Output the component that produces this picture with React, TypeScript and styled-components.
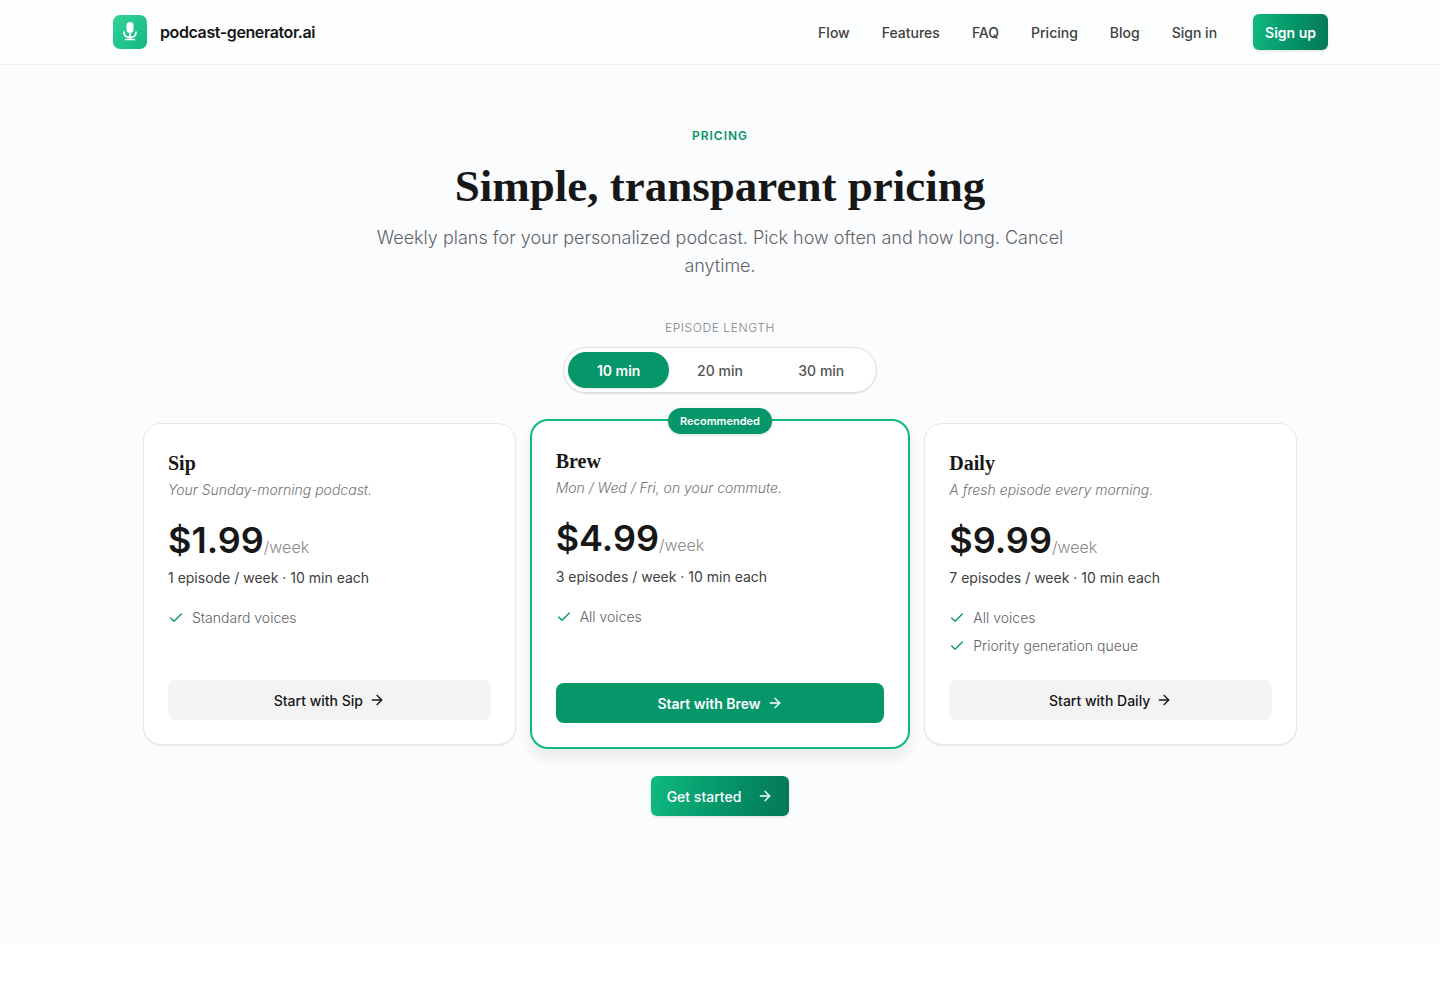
import React, { useState } from "react";
import styled, { createGlobalStyle, css } from "styled-components";
import { ArrowRight, Check } from "lucide-react";

const GlobalStyle = createGlobalStyle`
  *, *::before, *::after { box-sizing: border-box; }
  body {
    margin: 0;
    background: #fff;
    color: #171717;
    font-family: Inter, "Liberation Sans", sans-serif;
  }
  h1, h2, p, ul, fieldset { margin: 0; padding: 0; }
  button, input { font: inherit; }
`;

const serif = `"Liberation Serif", "Times New Roman", serif`;

const Header = styled.header`
  border-bottom: 1px solid #ebedf1;
  background: #fdfefe;
`;

const HeaderInner = styled.div`
  display: flex;
  align-items: center;
  justify-content: space-between;
  max-width: 1280px;
  height: 64px;
  margin: 0 auto;
  padding: 0 32px;
`;

const Brand = styled.a`
  display: flex;
  align-items: center;
  gap: 12px;
  color: #171717;
  font-size: 16px;
  font-weight: 600;
  letter-spacing: -0.025em;
  text-decoration: none;
`;

const Nav = styled.nav`
  display: flex;
  align-items: center;
  gap: 32px;
`;

const NavLink = styled.a`
  color: #404040;
  font-size: 14px;
  font-weight: 500;
  text-decoration: none;
`;

const gradientButton = css`
  border: 0;
  border-radius: 6px;
  background: linear-gradient(100deg, #10b981 0%, #059669 50%, #047857 100%);
  box-shadow: 0 1px 3px rgba(0, 0, 0, 0.12);
  color: #fff;
  font-size: 14px;
  cursor: pointer;
`;

const SignUp = styled.button`
  ${gradientButton}
  height: 36px;
  margin-left: 4px;
  padding: 0 12px;
  font-weight: 600;
`;

const Section = styled.main`
  display: flex;
  flex-direction: column;
  align-items: center;
  padding: 63px 32px 128px;
  background: #fbfcfe;
`;

const Eyebrow = styled.p`
  color: #059669;
  font-size: 12px;
  font-weight: 600;
  line-height: 16px;
  letter-spacing: 1px;
  text-transform: uppercase;
`;

const Title = styled.h1`
  margin-top: 16px;
  font-family: ${serif};
  font-size: 45px;
  font-weight: 700;
  line-height: 52px;
  text-align: center;
`;

const Subtitle = styled.p`
  max-width: 700px;
  margin-top: 12px;
  color: #5f6368;
  font-size: 18px;
  font-weight: 300;
  line-height: 28px;
  text-align: center;
`;

const LengthPicker = styled.fieldset`
  display: flex;
  flex-direction: column;
  align-items: center;
  margin-top: 40px;
  border: 0;
`;

const LengthLabel = styled.legend`
  margin: 0 auto;
  padding: 0 0 11px;
  color: #858585;
  font-size: 12px;
  font-weight: 300;
  line-height: 16px;
  letter-spacing: 0.05em;
  text-transform: uppercase;
`;

const Segments = styled.div`
  display: grid;
  grid-template-columns: repeat(3, 1fr);
  width: 314px;
  padding: 4px;
  border: 1px solid #dedfe1;
  border-radius: 999px;
  background: #fff;
  box-shadow: 0 1px 1px rgba(0, 0, 0, 0.1);
`;

const Segment = styled.label`
  display: flex;
  align-items: center;
  justify-content: center;
  height: 36px;
  border-radius: 999px;
  color: #525252;
  font-size: 14px;
  font-weight: 500;
  cursor: pointer;

  &:has(input:checked) {
    background: #059669;
    box-shadow: 0 1px 2px rgba(0, 0, 0, 0.1);
    color: #fff;
    font-weight: 600;
  }
  &:has(input:focus-visible) {
    outline: 2px solid #34d399;
  }
`;

const SegmentInput = styled.input`
  position: absolute;
  opacity: 0;
  pointer-events: none;
`;

const Plans = styled.div`
  display: grid;
  grid-template-columns: repeat(3, 1fr);
  gap: 18px;
  width: 100%;
  max-width: 1154px;
  margin-top: 30px;
`;

const Plan = styled.article<{ $featured: boolean }>`
  position: relative;
  display: flex;
  flex-direction: column;
  min-height: 322px;
  padding: 27px 24px 24px;
  border: 1px solid #e5e7eb;
  border-radius: 18px;
  background: #fff;
  box-shadow: 0 1px 1px rgba(0, 0, 0, 0.08);

  ${(p) =>
    p.$featured &&
    css`
      margin: -4px;
      padding-top: 28px;
      border: 2px solid #10b981;
      box-shadow: 0 8px 14px rgba(0, 0, 0, 0.08);
    `}
`;

const Badge = styled.span`
  position: absolute;
  top: -13px;
  left: 50%;
  transform: translateX(-50%);
  padding: 0 12px;
  border-radius: 999px;
  background: #059669;
  box-shadow: 0 1px 3px rgba(0, 0, 0, 0.15);
  color: #fff;
  font-size: 11px;
  font-weight: 600;
  line-height: 26px;
`;

const PlanName = styled.h2`
  font-family: ${serif};
  font-size: 20px;
  font-weight: 700;
  line-height: 24px;
`;

const Tagline = styled.p`
  margin-top: 5px;
  color: #737373;
  font-size: 14px;
  font-style: italic;
  font-weight: 300;
  line-height: 20px;
`;

const Price = styled.p`
  height: 40px;
  margin-top: 20px;
  color: #8a8a8a;
  font-size: 16px;
  font-weight: 300;
  line-height: 40px;
`;

const Amount = styled.strong`
  color: #171717;
  font-size: 36px;
  font-weight: 600;
`;

const Quota = styled.p<{ $featured: boolean }>`
  margin-top: ${(p) => (p.$featured ? 9 : 8)}px;
  color: #404040;
  font-size: 14px;
  line-height: 20px;
`;

const Features = styled.ul`
  display: grid;
  gap: 8px;
  margin: 20px 0;
  list-style: none;
`;

const Feature = styled.li`
  display: flex;
  align-items: center;
  gap: 8px;
  color: #5f6368;
  font-size: 14px;
  font-weight: 300;
  line-height: 20px;

  svg { color: #059669; }
`;

const PlanButton = styled.button<{ $featured: boolean }>`
  display: flex;
  align-items: center;
  justify-content: center;
  gap: 6px;
  height: 40px;
  margin-top: auto;
  border: 0;
  border-radius: 8px;
  background: ${(p) => (p.$featured ? "#059669" : "#f3f3f3")};
  color: ${(p) => (p.$featured ? "#fff" : "#171717")};
  font-size: 14px;
  font-weight: ${(p) => (p.$featured ? 600 : 500)};
  cursor: pointer;
`;

const GetStarted = styled.button`
  ${gradientButton}
  display: flex;
  align-items: center;
  gap: 16px;
  height: 40px;
  margin-top: 31px;
  padding: 0 16px;
  font-weight: 500;
`;

function Logo() {
  return (
    <svg width="36" height="36" viewBox="0 0 36 36" aria-hidden="true">
      <defs>
        <linearGradient id="logo-fill" x1="0" y1="0" x2="1" y2="1">
          <stop offset="0" stopColor="#34d399" />
          <stop offset="1" stopColor="#10b981" />
        </linearGradient>
      </defs>
      <rect x="1" y="1" width="34" height="34" rx="7" fill="url(#logo-fill)" />
      <rect x="14.5" y="8" width="7" height="11" rx="3.5" fill="#fff" />
      <path
        d="M12 18c0 3.5 2.6 5.4 6 5.4s6-1.9 6-5.4M18 19v6.4M13.6 25.5h8.8"
        fill="none"
        stroke="#fff"
        strokeWidth="1.7"
        strokeLinecap="round"
      />
    </svg>
  );
}

const links = ["Flow", "Features", "FAQ", "Pricing", "Blog", "Sign in"];
const lengths = [10, 20, 30];
const plans = [
  {
    name: "Sip",
    tagline: "Your Sunday-morning podcast.",
    price: "$1.99",
    quota: "1 episode / week",
    features: ["Standard voices"],
    featured: false,
  },
  {
    name: "Brew",
    tagline: "Mon / Wed / Fri, on your commute.",
    price: "$4.99",
    quota: "3 episodes / week",
    features: ["All voices"],
    featured: true,
  },
  {
    name: "Daily",
    tagline: "A fresh episode every morning.",
    price: "$9.99",
    quota: "7 episodes / week",
    features: ["All voices", "Priority generation queue"],
    featured: false,
  },
];

export default function App() {
  const [length, setLength] = useState(10);

  return (
    <>
      <GlobalStyle />
      <Header>
        <HeaderInner>
          <Brand href="#">
            <Logo />
            podcast-generator.ai
          </Brand>
          <Nav>
            {links.map((link) => (
              <NavLink key={link} href="#">
                {link}
              </NavLink>
            ))}
            <SignUp type="button">Sign up</SignUp>
          </Nav>
        </HeaderInner>
      </Header>
      <Section>
        <Eyebrow>Pricing</Eyebrow>
        <Title>Simple, transparent pricing</Title>
        <Subtitle>
          Weekly plans for your personalized podcast. Pick how often and how long. Cancel anytime.
        </Subtitle>
        <LengthPicker>
          <LengthLabel>Episode length</LengthLabel>
          <Segments>
            {lengths.map((n) => (
              <Segment key={n}>
                <SegmentInput
                  type="radio"
                  name="length"
                  value={n}
                  checked={length === n}
                  onChange={() => setLength(n)}
                />
                {n} min
              </Segment>
            ))}
          </Segments>
        </LengthPicker>
        <Plans>
          {plans.map((plan) => (
            <Plan key={plan.name} $featured={plan.featured}>
              {plan.featured && <Badge>Recommended</Badge>}
              <PlanName>{plan.name}</PlanName>
              <Tagline>{plan.tagline}</Tagline>
              <Price>
                <Amount>{plan.price}</Amount>/week
              </Price>
              <Quota $featured={plan.featured}>
                {plan.quota} · {length} min each
              </Quota>
              <Features>
                {plan.features.map((feature) => (
                  <Feature key={feature}>
                    <Check size={16} strokeWidth={2} />
                    {feature}
                  </Feature>
                ))}
              </Features>
              <PlanButton type="button" $featured={plan.featured}>
                Start with {plan.name}
                <ArrowRight size={16} strokeWidth={2} />
              </PlanButton>
            </Plan>
          ))}
        </Plans>
        <GetStarted type="button">
          Get started
          <ArrowRight size={16} strokeWidth={2} />
        </GetStarted>
      </Section>
    </>
  );
}
